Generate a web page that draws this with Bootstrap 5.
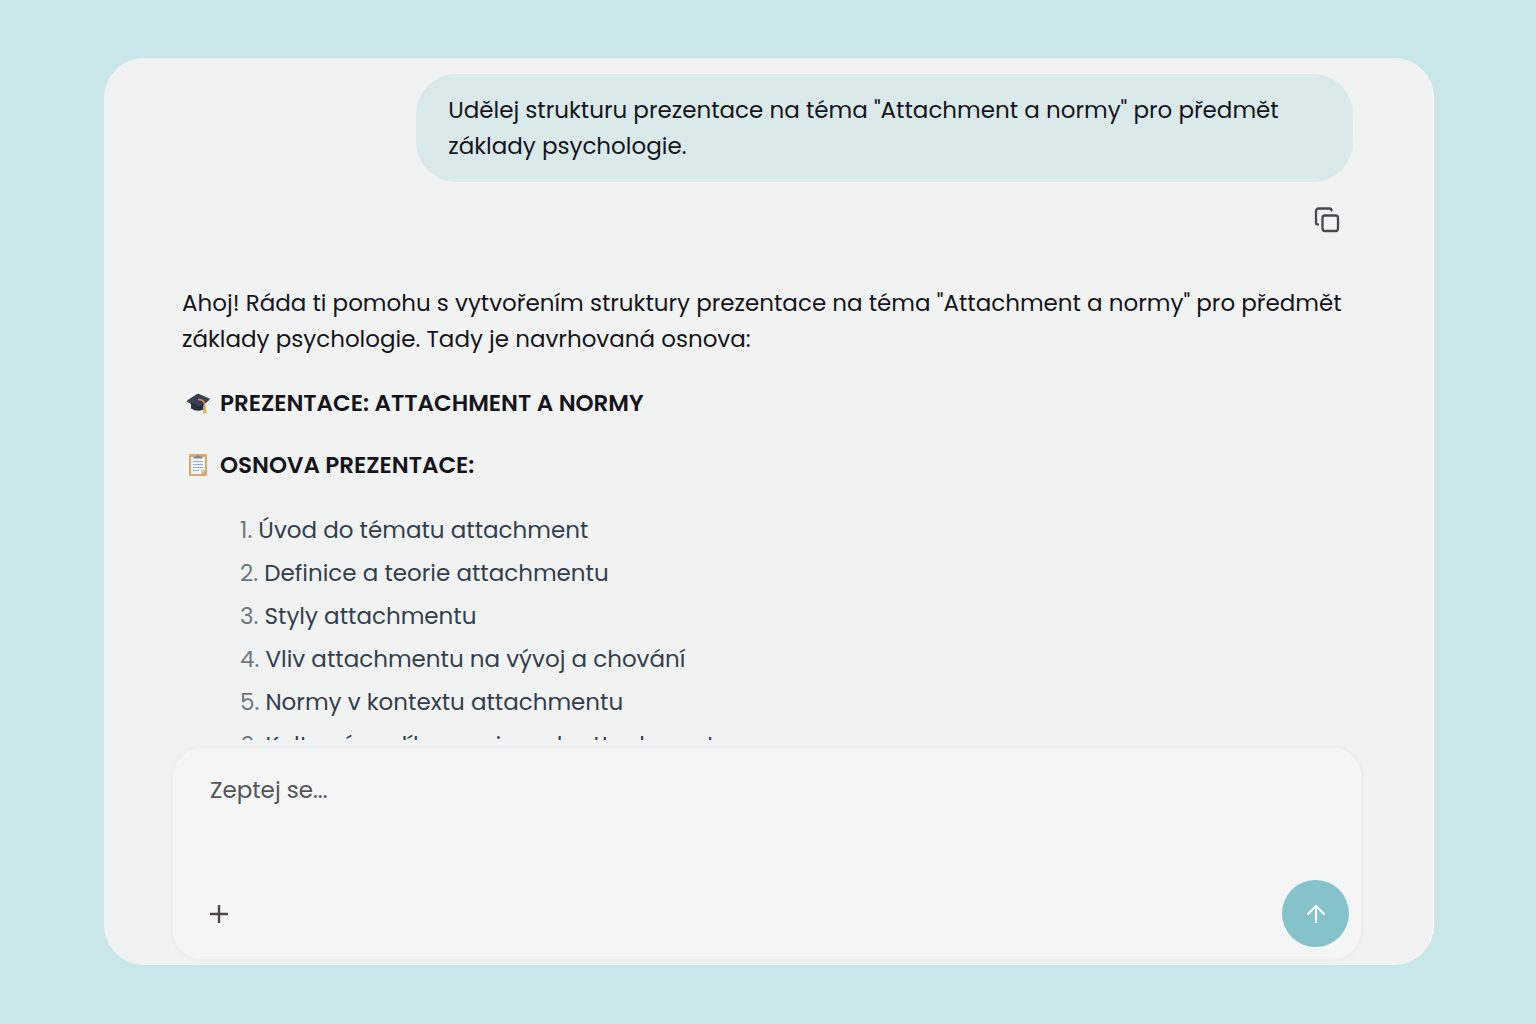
<!DOCTYPE html>
<html lang="cs">
<head>
<meta charset="utf-8">
<meta name="viewport" content="width=device-width, initial-scale=1">
<title>Chat</title>
<link href="https://cdn.jsdelivr.net/npm/bootstrap@5.3.0/dist/css/bootstrap.min.css" rel="stylesheet">
<style>
body{background:#c9e7e9;color:#17151c;font-family:Poppins,Inter,"Noto Sans",sans-serif;font-size:23px;line-height:36px}
.stage{height:100vh;padding:58px 102px 59px 104px}
.chat-panel{background:#f0f3f2;border-radius:40px;border-right:1px solid #fbfdfd}
.thread{padding:16px 80px 0 78px;min-height:0}
.bubble{background:#daeaea;border-radius:40px;padding:18px 32px;width:80%}
.copy-btn{color:#4b474d;width:52px;height:52px;margin-top:12px}
.answer{padding-top:39px}
.intro{margin-bottom:28px}
.section-title{font-size:23px;font-weight:600;line-height:36px;margin-bottom:26px}
.emoji-slot{width:38px;padding-left:4px}
.outline{list-style:none;counter-reset:n;padding-left:58px;margin:29px 0 0;color:#333f4e}
.outline li{counter-increment:n;line-height:36px;margin-bottom:7px}
.outline li::before{content:counter(n) ". ";color:#6b7a80}
.composer{background:#f4f6f5;border:3px solid #edf0f0;border-radius:32px;margin:5px 69px 3px 66px;height:217px;padding:24px 12px 12px 37px}
.prompt-box{resize:none;color:#504d52;font-size:23px;outline:0}
.prompt-box::placeholder{color:#56535a;opacity:1}
.plus-btn{color:#4b474d}
.send-btn{background:#86c2c9;width:67px;height:67px}
</style>
</head>
<body>
<div class="stage">
<main class="chat-panel h-100 d-flex flex-column overflow-hidden">
<section class="thread flex-grow-1 overflow-hidden">
<div class="d-flex flex-column align-items-end">
<div class="bubble">Udělej strukturu prezentace na téma "Attachment a normy" pro předmět základy psychologie.</div>
<button type="button" class="copy-btn btn p-0 border-0 d-flex align-items-center justify-content-center" aria-label="Kopírovat"><svg width="26" height="26" viewBox="0 0 26 26" fill="none" stroke="currentColor" stroke-width="2.3" stroke-linecap="round"><rect x="8.5" y="8.500" width="15.500" height="15.500" rx="2.500"/><path d="M4 17.500a2 2 0 0 1-2-2V4a2.500 2.500 0 0 1 2.500-2.500H15.500a2 2 0 0 1 2 2"/></svg></button>
</div>
<article class="answer">
<p class="intro">Ahoj! Ráda ti pomohu s vytvořením struktury prezentace na téma "Attachment a normy" pro předmět základy psychologie. Tady je navrhovaná osnova:</p>
<h2 class="section-title d-flex align-items-center"><span class="emoji-slot d-flex"><svg width="24" height="24" viewBox="0 0 24 24" aria-hidden="true"><path d="M5 10v7.500q6 4 12.500 1V10z" fill="#2a3044"/><path d="M1 9.500 11 3q1-.6 2 0l10.500 4.500L14 15.500q-1 .8-2.200.2z" fill="#363f56"/><path d="M1 9.500 11.800 15.700q1.200.6 2.200-.2l9.500-8v1.200L14 17q-1 .8-2.200.2L1 10.500z" fill="#1d2233"/><path d="M12 8.500q6 .2 6.500 4V17" fill="none" stroke="#dc9440" stroke-width="1.500"/><path d="M17.500 16h2.200l.8 6.500h-3.500z" fill="#e8a758"/></svg></span>PREZENTACE: ATTACHMENT A NORMY</h2>
<h2 class="section-title d-flex align-items-center"><span class="emoji-slot d-flex"><svg width="24" height="24" viewBox="0 0 24 24" aria-hidden="true"><rect x="3" y="1" width="18" height="22" rx="1.500" fill="#dfa764"/><path d="M5 4h14v13l-4 4H5z" fill="#f0f4f9"/><path d="M15 21v-4h4z" fill="#c4cfda"/><path d="M7 8.500h10M7 11.500h10M7 14.500h10M7 17.500h6" stroke="#9eb0c1" stroke-width="1.200"/><path d="M7.500 5.500V3.500h2.700a1.900 1.900 0 0 1 3.600 0h2.700v2z" fill="#7c8794"/></svg></span>OSNOVA PREZENTACE:</h2>
<ol class="outline">
<li>Úvod do tématu attachment</li>
<li>Definice a teorie attachmentu</li>
<li>Styly attachmentu</li>
<li>Vliv attachmentu na vývoj a chování</li>
<li>Normy v kontextu attachmentu</li>
<li>Kulturní rozdíly v projevech attachmentu a normy</li>
</ol>
</article>
</section>
<form class="composer d-flex flex-column flex-shrink-0">
<textarea class="prompt-box border-0 bg-transparent p-0 flex-grow-1" aria-label="Zpráva" placeholder="Zeptej se..."></textarea>
<div class="d-flex justify-content-between align-items-center">
<button type="button" class="plus-btn btn p-0 border-0 d-flex" aria-label="Přidat"><svg width="18" height="18" viewBox="0 0 18 18" stroke="currentColor" stroke-width="2.400"><path d="M9 0v18M0 9h18"/></svg></button>
<button type="button" class="send-btn btn rounded-circle p-0 border-0 d-flex align-items-center justify-content-center" aria-label="Odeslat"><svg width="20" height="20" viewBox="0 0 20 20" fill="none" stroke="#fff" stroke-width="2"><path d="M10 19V2M1.500 10.500 10 2l8.500 8.500"/></svg></button>
</div>
</form>
</main>
</div>
<script src="https://cdn.jsdelivr.net/npm/bootstrap@5.3.0/dist/js/bootstrap.bundle.min.js"></script>
</body>
</html>
